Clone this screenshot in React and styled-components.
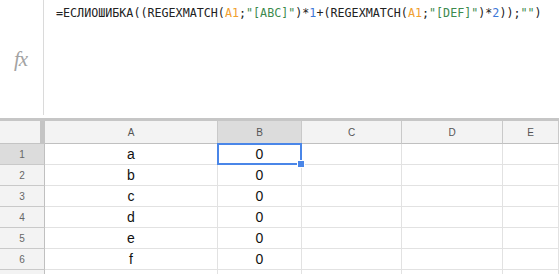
import React from 'react';
import styled, { createGlobalStyle } from 'styled-components';

const GlobalStyle = createGlobalStyle`
  html, body { margin: 0; padding: 0; background: #fff; }
  body { font-family: Arial, "Liberation Sans", sans-serif; overflow: hidden; }
`;

const Page = styled.div`
  width: 559px;
  height: 274px;
  overflow: hidden;
  background: #fff;
`;

// formula bar
const FormulaBar = styled.div`
  display: flex;
  height: 118px;
`;

const FxBox = styled.div`
  width: 44px;
  height: 115px;
  border-right: 1px solid #dadada;
  display: flex;
  align-items: center;
  justify-content: center;
  font-family: "Liberation Serif", "DejaVu Serif", serif;
  font-style: italic;
  font-size: 21px;
  color: #a3a3a3;
  letter-spacing: -1px;
  padding-right: 2px;
  box-sizing: border-box;
  padding-top: 3px;
`;

const Formula = styled.div`
  padding: 5px 0 0 12px;
  font-family: "DejaVu Sans Mono", "Liberation Mono", monospace;
  font-size: 11.7px;
  line-height: 16px;
  color: #222;
  white-space: nowrap;
`;

const Tok = styled.span`
  color: ${p => p.$c || '#222'};
`;

// grid
const Sheet = styled.div`
  border-top: 3px solid #c6c6c6;
  display: grid;
  grid-template-columns: 45px 173px 84px 100px 101px 1fr;
  grid-auto-rows: 21px;
  grid-template-rows: 23px;
  position: relative;
`;

const Corner = styled.div`
  background: #f3f3f3;
  border-right: 5px solid #c4c4c4;
  border-bottom: 1px solid #c4c4c4;
`;

const ColHead = styled.div`
  background: ${p => (p.$active ? '#dcdcdc' : '#f3f3f3')};
  border-right: 1px solid #c9c9c9;
  border-bottom: 1px solid #c0c0c0;
  display: flex;
  align-items: center;
  justify-content: center;
  font-size: 10px;
  color: #555;
  padding-top: 1px;
`;

const RowHead = styled.div`
  background: ${p => (p.$active ? '#dcdcdc' : '#f3f3f3')};
  border-right: 1px solid #c0c0c0;
  border-bottom: 1px solid #c9c9c9;
  display: flex;
  align-items: center;
  justify-content: center;
  font-size: 10px;
  color: #666;
`;

const Cell = styled.div`
  border-right: 1px solid #e2e2e2;
  border-bottom: 1px solid #e2e2e2;
  display: flex;
  align-items: center;
  justify-content: center;
  font-size: 14px;
  color: #111;
`;

const Selection = styled.div`
  position: absolute;
  left: 217px;
  top: 22px;
  width: 85px;
  height: 22px;
  border: 2px solid #4a86e8;
  box-sizing: border-box;
  pointer-events: none;

  &::after {
    content: '';
    position: absolute;
    right: -5px;
    bottom: -5px;
    width: 6px;
    height: 6px;
    background: #4a86e8;
    border: 1px solid #fff;
  }
`;

const ORANGE = '#f0a030';
const GREEN = '#3d8a4e';
const BLUE = '#3c78d8';

const cols = ['A', 'B', 'C', 'D', 'E'];
const values = ['a', 'b', 'c', 'd', 'e', 'f', ''];

function App() {
  return (
    <Page>
      <GlobalStyle />
      <FormulaBar>
        <FxBox>fx</FxBox>
        <Formula>
          <Tok>=ЕСЛИОШИБКА((REGEXMATCH(</Tok>
          <Tok $c={ORANGE}>A1</Tok>
          <Tok>;</Tok>
          <Tok $c={GREEN}>"[ABC]"</Tok>
          <Tok>)*</Tok>
          <Tok $c={BLUE}>1</Tok>
          <Tok>+(REGEXMATCH(</Tok>
          <Tok $c={ORANGE}>A1</Tok>
          <Tok>;</Tok>
          <Tok $c={GREEN}>"[DEF]"</Tok>
          <Tok>)*</Tok>
          <Tok $c={BLUE}>2</Tok>
          <Tok>));</Tok>
          <Tok $c={GREEN}>""</Tok>
          <Tok>)</Tok>
        </Formula>
      </FormulaBar>

      <Sheet>
        <Corner />
        {cols.map(c => (
          <ColHead key={c} $active={c === 'B'}>{c}</ColHead>
        ))}
        {values.map((v, i) => (
          <React.Fragment key={i}>
            <RowHead $active={i === 0}>{i < 6 ? i + 1 : ''}</RowHead>
            <Cell>{v}</Cell>
            <Cell>{i < 6 ? '0' : ''}</Cell>
            <Cell />
            <Cell />
            <Cell />
          </React.Fragment>
        ))}
        <Selection />
      </Sheet>
    </Page>
  );
}

export default App;
